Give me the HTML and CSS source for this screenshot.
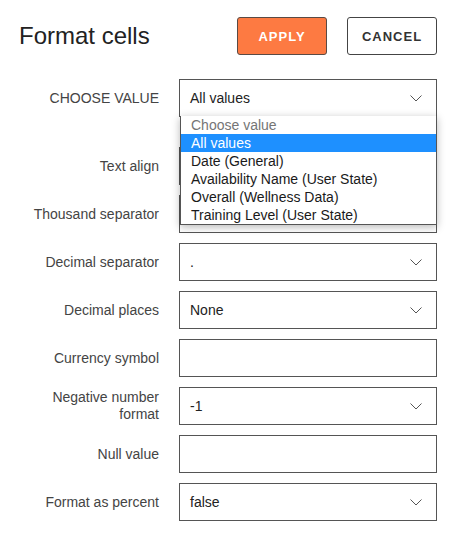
FILE: index.html
```html
<!DOCTYPE html>
<html>
<head>
<meta charset="utf-8">
<link rel="stylesheet" href="styles.css">
</head>
<body>
<div class="panel">
  <div class="header">
    <h1 class="title">Format cells</h1>
    <div class="actions">
      <button class="btn btn-apply">APPLY</button>
      <button class="btn btn-cancel">CANCEL</button>
    </div>
  </div>
  <div class="form">
    <div class="row row-first">
      <div class="label">CHOOSE VALUE</div>
      <div class="field">
        <div class="box">
          <span class="value">All values</span>
          <svg class="chev" width="12" height="7" viewBox="0 0 12 7"><path d="M0.5 0.5 L6 6 L11.5 0.5" fill="none" stroke="#555" stroke-width="1"/></svg>
        </div>
        <ul class="menu">
          <li class="opt opt-placeholder">Choose value</li>
          <li class="opt opt-active">All values</li>
          <li class="opt">Date (General)</li>
          <li class="opt">Availability Name (User State)</li>
          <li class="opt">Overall (Wellness Data)</li>
          <li class="opt">Training Level (User State)</li>
        </ul>
      </div>
    </div>
    <div class="row">
      <div class="label">Text align</div>
      <div class="field"><div class="box"><span class="value"></span></div></div>
    </div>
    <div class="row">
      <div class="label">Thousand separator</div>
      <div class="field"><div class="box"><span class="value"></span></div></div>
    </div>
    <div class="row">
      <div class="label">Decimal separator</div>
      <div class="field">
        <div class="box">
          <span class="value">.</span>
          <svg class="chev" width="12" height="7" viewBox="0 0 12 7"><path d="M0.5 0.5 L6 6 L11.5 0.5" fill="none" stroke="#555" stroke-width="1"/></svg>
        </div>
      </div>
    </div>
    <div class="row">
      <div class="label">Decimal places</div>
      <div class="field">
        <div class="box">
          <span class="value">None</span>
          <svg class="chev" width="12" height="7" viewBox="0 0 12 7"><path d="M0.5 0.5 L6 6 L11.5 0.5" fill="none" stroke="#555" stroke-width="1"/></svg>
        </div>
      </div>
    </div>
    <div class="row">
      <div class="label">Currency symbol</div>
      <div class="field"><div class="box"><span class="value"></span></div></div>
    </div>
    <div class="row">
      <div class="label">Negative number format</div>
      <div class="field">
        <div class="box">
          <span class="value">-1</span>
          <svg class="chev" width="12" height="7" viewBox="0 0 12 7"><path d="M0.5 0.5 L6 6 L11.5 0.5" fill="none" stroke="#555" stroke-width="1"/></svg>
        </div>
      </div>
    </div>
    <div class="row">
      <div class="label">Null value</div>
      <div class="field"><div class="box"><span class="value"></span></div></div>
    </div>
    <div class="row">
      <div class="label">Format as percent</div>
      <div class="field">
        <div class="box">
          <span class="value">false</span>
          <svg class="chev" width="12" height="7" viewBox="0 0 12 7"><path d="M0.5 0.5 L6 6 L11.5 0.5" fill="none" stroke="#555" stroke-width="1"/></svg>
        </div>
      </div>
    </div>
  </div>
</div>
</body>
</html>
```
FILE: styles.css
```css
* { box-sizing: border-box; }
html, body { margin: 0; padding: 0; background: #fff; }
body {
  font-family: "Liberation Sans", Arial, sans-serif;
  color: #222;
}
.panel {
  padding: 17px 19px 0 19px;
}
.header {
  display: flex;
  align-items: center;
  justify-content: space-between;
  height: 38px;
}
.title {
  margin: 0;
  font-size: 24px;
  font-weight: normal;
  color: #222;
  line-height: 38px;
}
.actions {
  display: flex;
  gap: 20px;
}
.btn {
  width: 90px;
  height: 38px;
  border-radius: 3px;
  font-family: "Liberation Sans", Arial, sans-serif;
  font-size: 13px;
  font-weight: bold;
  letter-spacing: 1px;
  padding: 0;
  cursor: pointer;
}
.btn-apply {
  background: #fd7a42;
  color: #fff;
  border: 1px solid #5a4a44;
}
.btn-cancel {
  background: #fff;
  color: #333;
  border: 1px solid #444;
}
.form {
  margin-top: 24px;
  display: flex;
  flex-direction: column;
  gap: 10px;
}
.row {
  display: flex;
  align-items: center;
}
.row-first {
  margin-bottom: 20px;
}
.label {
  width: 140px;
  text-align: right;
  font-size: 14px;
  line-height: 17px;
  color: #444;
  padding-left: 14px;
}
.field {
  position: relative;
  margin-left: 20px;
  flex: 1;
}
.box {
  height: 38px;
  border: 1px solid #555;
  display: flex;
  align-items: center;
  justify-content: space-between;
  padding: 0 14px 0 10px;
  font-size: 14px;
  color: #222;
  background: #fff;
}
.chev { display: block; }
.menu {
  position: absolute;
  top: 37px;
  left: 1px;
  right: 0;
  margin: 0;
  padding: 0;
  list-style: none;
  background: #fff;
  border: 1px solid #555;
  border-top: none;
  box-shadow: 0 2px 8px rgba(0, 0, 0, 0.28);
  z-index: 5;
}
.opt {
  height: 18px;
  line-height: 18px;
  font-size: 14px;
  padding-left: 10px;
  color: #1a1a1a;
}
.opt-placeholder { color: #757575; }
.opt-active { background: #1e90ff; color: #fff; }
```
